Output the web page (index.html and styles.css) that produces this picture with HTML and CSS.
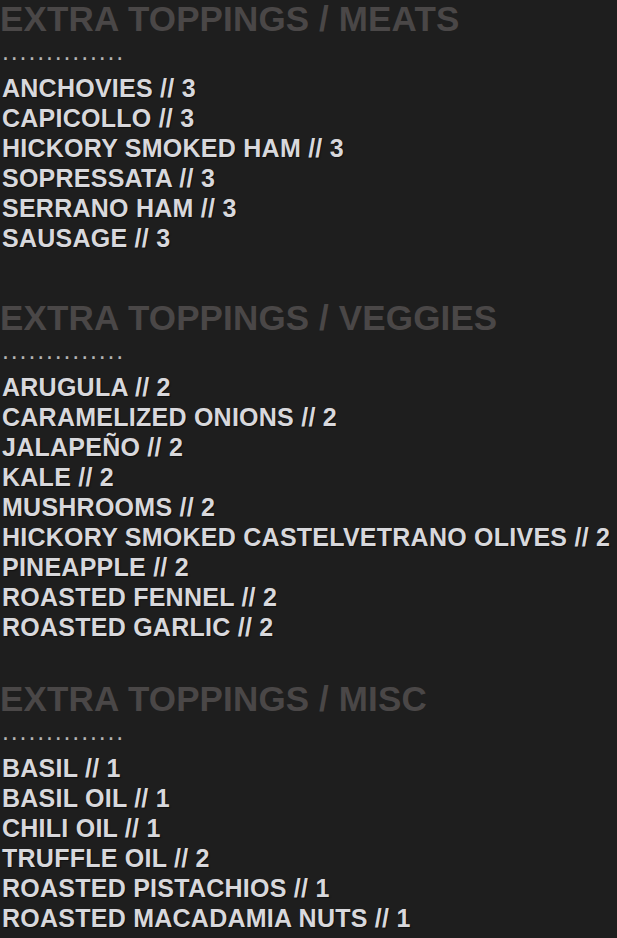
FILE: index.html
```html
<!DOCTYPE html>
<html lang="en">
<head>
    <meta charset="UTF-8">
    <meta name="viewport" content="width=device-width, initial-scale=1.0">
    <title>Extra Toppings</title>
    <link rel="stylesheet" href="styles.css">
</head>
<body>
<div class="menu">
    <section class="menu-section menu-section--first">
        <h2 class="section-title">EXTRA TOPPINGS / MEATS</h2>
        <div class="divider">..............</div>
        <ul class="item-list">
            <li>ANCHOVIES // 3</li>
            <li>CAPICOLLO // 3</li>
            <li>HICKORY SMOKED HAM // 3</li>
            <li>SOPRESSATA // 3</li>
            <li>SERRANO HAM // 3</li>
            <li>SAUSAGE // 3</li>
        </ul>
    </section>

    <section class="menu-section">
        <h2 class="section-title">EXTRA TOPPINGS / VEGGIES</h2>
        <div class="divider">..............</div>
        <ul class="item-list">
            <li>ARUGULA // 2</li>
            <li>CARAMELIZED ONIONS // 2</li>
            <li>JALAPEÑO // 2</li>
            <li>KALE // 2</li>
            <li>MUSHROOMS // 2</li>
            <li>HICKORY SMOKED CASTELVETRANO OLIVES // 2</li>
            <li>PINEAPPLE // 2</li>
            <li>ROASTED FENNEL // 2</li>
            <li>ROASTED GARLIC // 2</li>
        </ul>
    </section>

    <section class="menu-section">
        <h2 class="section-title">EXTRA TOPPINGS / MISC</h2>
        <div class="divider">..............</div>
        <ul class="item-list">
            <li>BASIL // 1</li>
            <li>BASIL OIL // 1</li>
            <li>CHILI OIL // 1</li>
            <li>TRUFFLE OIL // 2</li>
            <li>ROASTED PISTACHIOS // 1</li>
            <li>ROASTED MACADAMIA NUTS // 1</li>
        </ul>
    </section>
</div>
</body>
</html>
```

FILE: styles.css
```css
/* Global Styles */
* {
    margin: 0;
    padding: 0;
    box-sizing: border-box;
    font-family: "Liberation Sans", Arial, sans-serif;
}

body {
    background-color: #1e1e1e;
    margin: 0;
}

.menu {
    display: flex;
    flex-direction: column;
    padding: 0 0 0 2px;
}

.menu-section {
    margin-bottom: 38px;
}

.menu-section--first {
    margin-bottom: 46px;
}

.section-title {
    font-size: 35px;
    line-height: 38px;
    font-weight: bold;
    color: #4a4747;
    letter-spacing: 0.14px;
    margin-left: -2px;
    white-space: nowrap;
}

.divider {
    font-size: 25px;
    line-height: 30px;
    letter-spacing: 1.85px;
    color: #b4b4b4;
    margin-top: -2px;
}

.item-list {
    list-style: none;
    margin-top: 7px;
}

.item-list li {
    font-size: 25px;
    line-height: 30px;
    font-weight: bold;
    color: #d8d8dc;
    letter-spacing: 0.25px;
    white-space: nowrap;
    text-shadow: 1px 1px 1px rgba(0, 0, 0, 0.5);
}
```
